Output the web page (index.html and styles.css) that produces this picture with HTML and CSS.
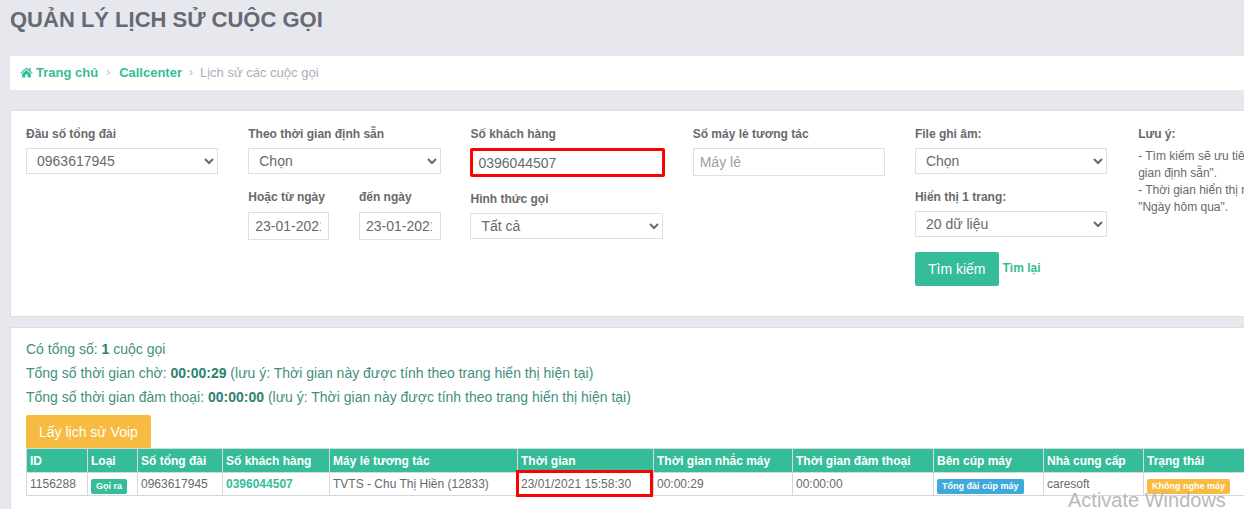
FILE: index.html
```html
<!DOCTYPE html>
<html lang="vi">
<head>
  <meta charset="UTF-8">
  <title>Quản lý lịch sử cuộc gọi</title>
  <link rel="stylesheet" href="styles.css">
</head>
<body>
  <h1 class="page-title">QUẢN LÝ LỊCH SỬ CUỘC GỌI</h1>

  <div class="breadcrumb">
    <svg class="home-icon" viewBox="0 0 14 12" width="13" height="11"><path d="M7 0.5 L0.2 6.2 L1 7.1 L7 2.2 L13 7.1 L13.8 6.2 L11.5 4.3 L11.5 1 L9.8 1 L9.8 2.9 Z M7 3.2 L2.3 7 L2.3 11.5 L5.8 11.5 L5.8 8.2 L8.2 8.2 L8.2 11.5 L11.7 11.5 L11.7 7 Z"/></svg>
    <a class="crumb crumb-home">Trang chủ</a>
    <span class="sep">›</span>
    <a class="crumb">Callcenter</a>
    <span class="sep">›</span>
    <span class="crumb-now">Lịch sử các cuộc gọi</span>
  </div>

  <div class="panel search-panel">
    <div class="col">
      <label>Đầu số tổng đài</label>
      <select class="field"><option>0963617945</option></select>
    </div>

    <div class="col">
      <label>Theo thời gian định sẵn</label>
      <select class="field"><option>Chọn</option></select>
      <div class="date-row">
        <div class="date-from">
          <label>Hoặc từ ngày</label>
          <input class="field date" type="text" value="23-01-2021">
        </div>
        <div class="date-to">
          <label>đến ngày</label>
          <input class="field date" type="text" value="23-01-2021">
        </div>
      </div>
    </div>

    <div class="col">
      <label>Số khách hàng</label>
      <input class="field marked" type="text" value="0396044507">
      <label class="label-next">Hình thức gọi</label>
      <select class="field"><option>Tất cả</option></select>
    </div>

    <div class="col">
      <label>Số máy lẻ tương tác</label>
      <input class="field" type="text" placeholder="Máy lẻ">
    </div>

    <div class="col">
      <label>File ghi âm:</label>
      <select class="field"><option>Chọn</option></select>
      <label class="label-next">Hiển thị 1 trang:</label>
      <select class="field"><option>20 dữ liệu</option></select>
      <div class="actions">
        <button class="btn btn-green">Tìm kiếm</button>
        <a class="reset">Tìm lại</a>
      </div>
    </div>

    <div class="col note">
      <label>Lưu ý:</label>
      <p>- Tìm kiếm sẽ ưu tiên theo "Theo thời<br>gian định sẵn".<br>- Thời gian hiển thị mặc định là<br>"Ngày hôm qua".</p>
    </div>
  </div>

  <div class="panel result-panel">
    <p class="stat">Có tổng số: <b>1</b> cuộc gọi</p>
    <p class="stat">Tổng số thời gian chờ: <b>00:00:29</b> (lưu ý: Thời gian này được tính theo trang hiển thị hiện tại)</p>
    <p class="stat">Tổng số thời gian đàm thoại: <b>00:00:00</b> (lưu ý: Thời gian này được tính theo trang hiển thị hiện tại)</p>
    <button class="btn btn-yellow">Lấy lịch sử Voip</button>

    <table class="calls">
      <colgroup>
        <col class="c-id"><col class="c-type"><col class="c-line"><col class="c-phone"><col class="c-ext"><col class="c-time">
        <col class="c-wait"><col class="c-talk"><col class="c-end"><col class="c-vendor"><col class="c-status">
      </colgroup>
      <thead>
        <tr>
          <th>ID</th><th>Loại</th><th>Số tổng đài</th><th>Số khách hàng</th><th>Máy lẻ tương tác</th><th>Thời gian</th>
          <th>Thời gian nhắc máy</th><th>Thời gian đàm thoại</th><th>Bên cúp máy</th><th>Nhà cung cấp</th><th>Trạng thái</th>
        </tr>
      </thead>
      <tbody>
        <tr>
          <td>1156288</td>
          <td><span class="tag tag-green">Gọi ra</span></td>
          <td>0963617945</td>
          <td><a class="phone">0396044507</a></td>
          <td>TVTS - Chu Thị Hiền (12833)</td>
          <td class="time-cell">23/01/2021 15:58:30</td>
          <td>00:00:29</td>
          <td>00:00:00</td>
          <td><span class="tag tag-blue">Tổng đài cúp máy</span></td>
          <td>caresoft</td>
          <td><span class="tag tag-yellow">Không nghe máy</span></td>
        </tr>
      </tbody>
    </table>
  </div>

  <div class="watermark">Activate Windows</div>
</body>
</html>
```

FILE: styles.css
```css
html, body {
  height: 509px;
  overflow: hidden;
}
body {
  margin: 0;
  width: 1244px;
  background: #e7e8ee;
  font-family: "Liberation Sans", Arial, sans-serif;
  font-size: 13px;
  color: #676a6c;
  position: relative;
}
.page-title {
  margin: 0;
  padding: 8px 0 0 10px;
  height: 56px;
  box-sizing: border-box;
  font-size: 22px;
  line-height: 24px;
  font-weight: bold;
  color: #666a75;
}
.breadcrumb {
  margin-left: 10px;
  height: 34px;
  box-sizing: border-box;
  padding: 0 0 2px 10px;
  background: #fff;
  display: flex;
  align-items: center;
  font-size: 13px;
  white-space: nowrap;
}
.home-icon {
  fill: #34bc98;
  margin-right: 3px;
}
.crumb {
  color: #34bc98;
  font-weight: bold;
}
.crumb-home + .sep {
  margin: 0 9px 0 8px;
}
.crumb-now {
  color: #a9b0b8;
}
.sep {
  color: #b5bbc1;
  margin: 0 7px 0 7px;
  font-size: 12px;
}
.panel {
  background: #fff;
  border: 1px solid #dcdde1;
  margin-left: 10px;
  width: 1300px;
  box-sizing: border-box;
}
.search-panel {
  margin-top: 20px;
  height: 207px;
  padding: 15px 15px 0;
  display: flex;
  gap: 29.85px;
  align-items: flex-start;
}
.col {
  width: 192.4px;
  flex: none;
}
label {
  display: block;
  font-size: 12px;
  line-height: 16px;
  font-weight: bold;
  color: #676a6c;
  margin-bottom: 6px;
}
.label-next {
  margin-top: 15px;
}
.field {
  display: block;
  width: 100%;
  height: 26px;
  box-sizing: border-box;
  border: 1px solid #dddfe1;
  border-radius: 0;
  background: #fff;
  padding: 0 6px;
  font-family: inherit;
  font-size: 14px;
  color: #676a6c;
  outline: none;
}
input.field {
  padding: 0 6px;
  height: 28px;
}
input.field::placeholder {
  color: #9a9ea3;
}
input.marked {
  border: 3px solid #f00;
  border-radius: 2px;
  padding: 0 5px;
  margin: 0 0 -1px;
  width: calc(100% + 2px);
  height: 29px;
}
.date-row {
  display: flex;
  gap: 30px;
  margin-top: 15px;
}
.date-row label {
  margin-bottom: 7px;
}
input.date {
  padding-right: 8px;
}
.date-from {
  width: 81px;
}
.date-from input.date {
  padding-right: 7px;
}
.date-to {
  width: 82px;
}
.actions {
  display: flex;
  align-items: flex-start;
  gap: 4px;
  margin-top: 15px;
}
.btn {
  border: 1px solid transparent;
  border-radius: 2px;
  color: #fff;
  font-family: inherit;
  font-size: 14px;
  height: 34px;
  padding: 0 12px;
}
.btn-green {
  background: #35bc98;
}
.btn-yellow {
  background: #f7bb42;
  display: block;
  margin-top: 6px;
}
.reset {
  color: #35bc98;
  font-size: 12px;
  font-weight: bold;
  line-height: 18px;
  margin-top: 7px;
}
.note {
  width: 250px;
  margin-left: 1px;
}
.note p {
  margin: 4px 0 0;
  font-size: 12px;
  line-height: 17px;
}
.result-panel {
  margin-top: 10px;
  height: 200px;
  padding: 9px 15px 0;
}
.stat {
  margin: 0;
  font-size: 14px;
  line-height: 24px;
  color: #3f8f7f;
  white-space: nowrap;
}
.stat b {
  color: #2d8270;
}
.calls {
  border-collapse: collapse;
  table-layout: fixed;
  width: 1236px;
  margin-top: -1px;
  font-size: 12px;
}
.c-id { width: 61px; }
.c-type { width: 50px; }
.c-line { width: 85px; }
.c-phone { width: 107px; }
.c-ext { width: 188px; }
.c-time { width: 136px; }
.c-wait { width: 139px; }
.c-talk { width: 141px; }
.c-end { width: 110px; }
.c-vendor { width: 100px; }
.c-status { width: 119px; }
.calls th {
  background: #35bc98;
  color: #fff;
  height: 23px;
  padding: 0 3px;
  text-align: left;
  border: 1px solid #d6d8da;
  font-size: 12px;
  font-weight: bold;
  white-space: nowrap;
}
.calls td {
  height: 22px;
  padding: 0 3px;
  border: 1px solid #d6d8da;
  color: #676a6c;
  white-space: nowrap;
}
.phone {
  color: #35bc98;
  font-weight: bold;
}
.tag {
  display: inline-block;
  padding: 0 5px;
  height: 15px;
  line-height: 15px;
  border-radius: 2px;
  color: #fff;
  font-size: 9px;
  font-weight: bold;
  vertical-align: -3px;
}
.tag-green { background: #35bc98; }
.tag-blue { background: #3fa9dc; }
.tag-yellow { background: #f7bb42; }
.time-cell {
  position: relative;
}
.time-cell::after {
  content: "";
  position: absolute;
  left: -2px;
  top: -3px;
  width: 137px;
  height: 27px;
  box-sizing: border-box;
  border: 3px solid #f00;
}
.watermark {
  position: absolute;
  left: 1068px;
  top: 492px;
  font-size: 20px;
  line-height: 16px;
  color: #b8b9bb;
  white-space: nowrap;
}
```
